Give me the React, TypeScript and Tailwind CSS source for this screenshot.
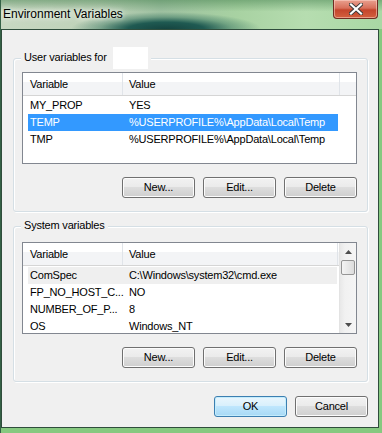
import React from "react";

type Row = { name: string; value: string; state?: "selected" | "hot" };

const userRows: Row[] = [
  { name: "MY_PROP", value: "YES" },
  { name: "TEMP", value: "%USERPROFILE%\\AppData\\Local\\Temp", state: "selected" },
  { name: "TMP", value: "%USERPROFILE%\\AppData\\Local\\Temp" },
];

const systemRows: Row[] = [
  { name: "ComSpec", value: "C:\\Windows\\system32\\cmd.exe", state: "hot" },
  { name: "FP_NO_HOST_C...", value: "NO" },
  { name: "NUMBER_OF_P...", value: "8" },
  { name: "OS", value: "Windows_NT" },
];

const WinButton = ({ label, primary }: { label: string; primary?: boolean }) => {
  if (primary) {
    return (
      <button className="h-[21px] w-[73px] rounded-[3px] border border-[#3c7fb1] bg-[linear-gradient(#eaf6fd_0%,#d9f0fc_45%,#bee6fd_50%,#a7d9f5_100%)] text-[11px] leading-none text-black shadow-[inset_0_0_0_1px_#c4ecfc]">
        {label}
      </button>
    );
  }
  return (
    <button className="h-[21px] w-[73px] rounded-[3px] border border-[#707070] bg-[linear-gradient(#f2f2f2_0%,#ebebeb_45%,#dddddd_50%,#cfcfcf_100%)] text-[11px] leading-none text-black shadow-[inset_0_0_0_1px_#fcfcfc]">
      {label}
    </button>
  );
};

const Arrow = ({ down }: { down?: boolean }) => (
  <div className="flex h-[17px] items-center justify-center">
    <svg width="7" height="4" viewBox="0 0 7 4">
      {down ? <path d="M0 0h7L3.5 4z" fill="#4d4d4d" /> : <path d="M0 4h7L3.5 0z" fill="#4d4d4d" />}
    </svg>
  </div>
);

const ListView = ({ rows, scroll }: { rows: Row[]; scroll?: boolean }) => (
  <div className="flex h-[92px] w-[335px] overflow-hidden border border-[#828790] bg-white">
    <div className="flex min-w-0 flex-1 flex-col">
      <div className="flex h-[23px] shrink-0 items-center border-b border-[#d5d5d5] bg-[linear-gradient(#ffffff_0%,#ffffff_40%,#f3f4f6_40%,#f3f4f6_100%)]">
        <div className="w-[99px] pl-[7px]">Variable</div>
        <div className="h-full w-px bg-[#e0e4e9]" />
        <div className={scroll ? "w-[214px] pl-[6px]" : "w-[216px] pl-[6px]"}>Value</div>
        <div className="h-full w-px bg-[#e0e4e9]" />
      </div>
      <div className="mt-px flex flex-col">
        {rows.map((r) => (
          <div
            key={r.name}
            className={
              r.state === "selected"
                ? "ml-[5px] flex h-[17px] w-[310px] items-center bg-[#3399ff] text-white"
                : r.state === "hot"
                  ? "ml-[5px] flex h-[17px] w-[309px] items-center bg-[#efefef]"
                  : "ml-[5px] flex h-[17px] w-[310px] items-center"
            }
          >
            <div className="w-[101px] shrink-0 whitespace-nowrap pl-[2px]">{r.name}</div>
            <div className="whitespace-nowrap">{r.value}</div>
          </div>
        ))}
      </div>
    </div>
    {scroll && (
      <div className="flex w-[17px] shrink-0 flex-col border-l border-[#e3e3e3] bg-[linear-gradient(90deg,#e8e8e8,#f1f1f1_30%,#f5f5f5)]">
        <Arrow />
        <div className="ml-px h-[15px] w-[14px] rounded-[2px] border border-[#959595] bg-[linear-gradient(90deg,#f4f4f4,#e8e8e8_50%,#dcdcdc)]" />
        <div className="flex-1" />
        <Arrow down />
      </div>
    )}
  </div>
);

const GroupBox = ({ title, children, last }: { title: React.ReactNode; children: React.ReactNode; last?: boolean }) => (
  <div
    className={
      last
        ? "ml-[11px] mt-[14px] flex w-[355px] flex-col rounded-[3px] border border-[#d5dfe5] pb-[13px] pl-[8px] shadow-[inset_1px_1px_0_#ffffff,1px_1px_0_#ffffff]"
        : "ml-[11px] mt-[28px] flex w-[355px] flex-col rounded-[3px] border border-[#d5dfe5] pb-[13px] pl-[8px] shadow-[inset_1px_1px_0_#ffffff,1px_1px_0_#ffffff]"
    }
  >
    <div className="-mt-[9px] ml-[-1px] flex h-[15px] w-fit items-center bg-[#f0f0f0] px-[3px]">{title}</div>
    {children}
  </div>
);

export default function App() {
  return (
    <div className="h-[433px] w-[382px] overflow-hidden border-l border-[#356146] bg-[#86c980] font-['Liberation_Sans',Arial,sans-serif] text-[11px] tracking-[-0.2px] text-black">
      {/* caption */}
      <div className="flex h-[29px] items-start justify-between bg-[radial-gradient(ellipse_95px_17px_at_165px_29px,#154440_0%,#1f5a52_40%,rgba(60,120,100,0.5)_70%,transparent_100%),linear-gradient(rgba(70,130,80,0.5),transparent_40%),linear-gradient(90deg,#c8d8c2_0%,#bed2b8_25%,#9dc0a0_42%,#a8d2a2_62%,#b6ddb0_80%,#a9d8a4_100%)]">
        <div className="pl-[2px] pt-[7px] text-[12px] leading-[15px] tracking-normal [text-shadow:0_0_8px_#ffffff,0_0_4px_#eef5ea]">
          Environment Variables
        </div>
        <div className="mr-[4px] flex h-[19px] w-[45px] items-center justify-center rounded-b-[4px] border border-t-0 border-[#6e2c22] bg-[linear-gradient(#e9a08f_0%,#d8705b_45%,#c4452c_55%,#d3603e_100%)] shadow-[inset_0_0_0_1px_rgba(255,220,210,0.5)]">
          <svg width="14" height="12" viewBox="0 0 14 12">
            <path d="M2 1.5l10 9M12 1.5l-10 9" stroke="#3a3a3a" strokeWidth="4" strokeLinecap="square" />
            <path d="M2 1.5l10 9M12 1.5l-10 9" stroke="#ffffff" strokeWidth="2.2" strokeLinecap="square" />
          </svg>
        </div>
      </div>

      {/* client */}
      <div className="flex h-[399px] w-[378px] flex-col border border-[#2f4d3c] bg-[#f0f0f0]">
        <GroupBox
          title={
            <>
              <span>User variables for</span>
              <span className="-my-[4px] ml-[6px] inline-block h-[22px] w-[35px] bg-white" />
            </>
          }
        >
          <div className="mt-[7px]">
            <ListView rows={userRows} />
          </div>
          <div className="mt-[13px] flex w-[335px] justify-end gap-[8px]">
            <WinButton label="New..." />
            <WinButton label="Edit..." />
            <WinButton label="Delete" />
          </div>
        </GroupBox>

        <GroupBox title="System variables" last>
          <div className="mt-[9px]">
            <ListView rows={systemRows} scroll />
          </div>
          <div className="mt-[13px] flex w-[335px] justify-end gap-[8px]">
            <WinButton label="New..." />
            <WinButton label="Edit..." />
            <WinButton label="Delete" />
          </div>
        </GroupBox>

        <div className="ml-[11px] mt-[14px] flex w-[355px] justify-end gap-[8px]">
          <WinButton label="OK" primary />
          <WinButton label="Cancel" />
        </div>
      </div>
    </div>
  );
}
